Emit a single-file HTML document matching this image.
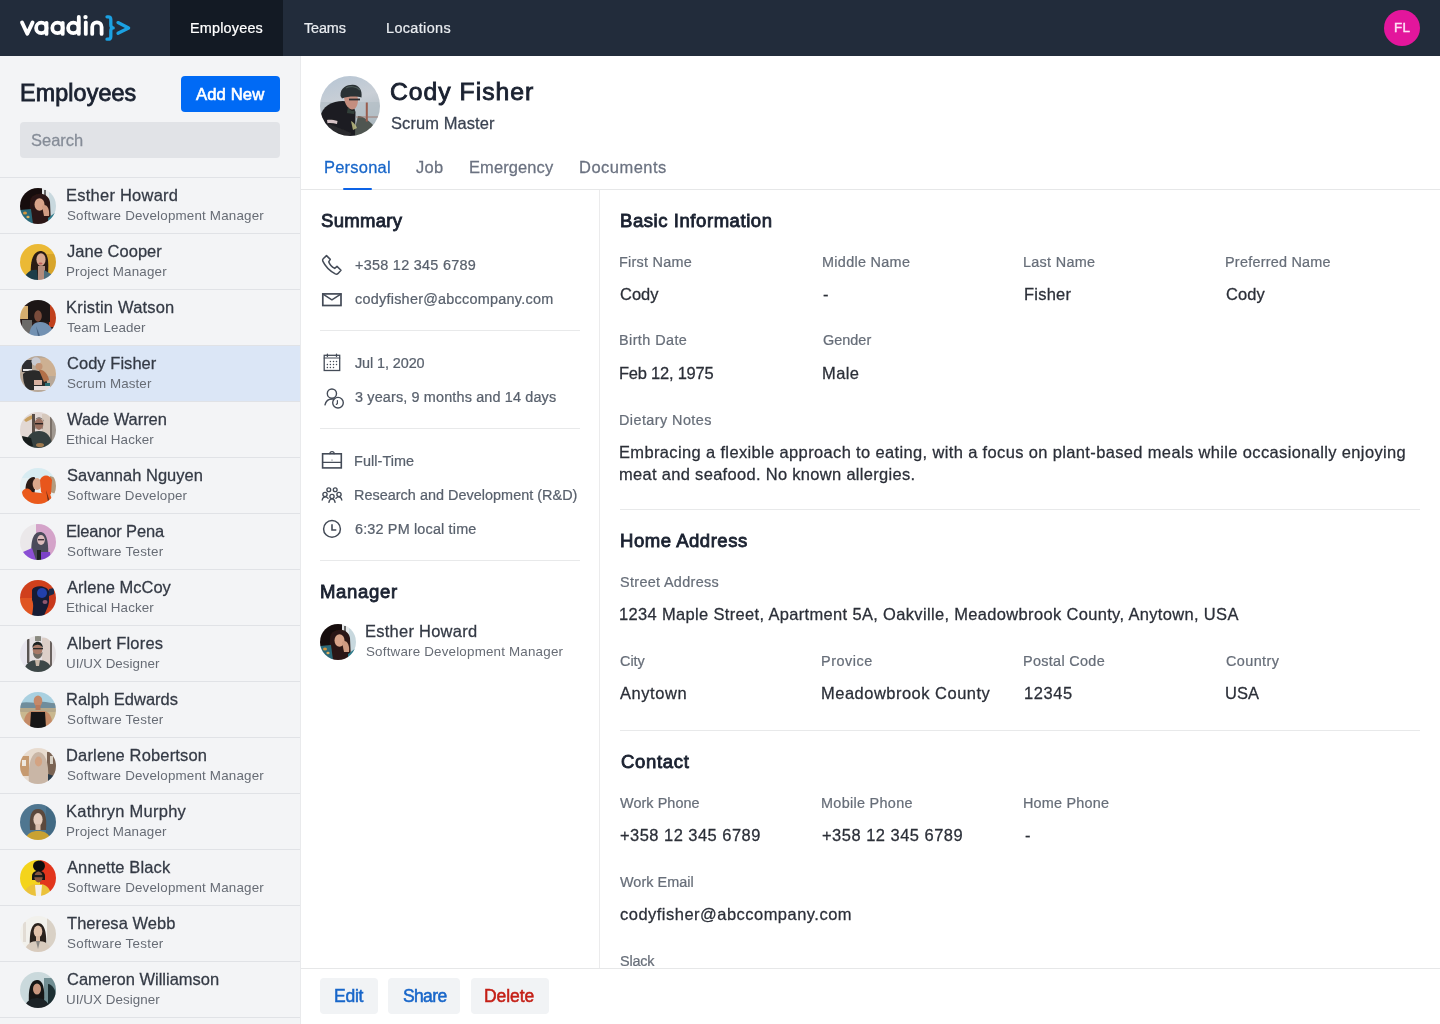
<!DOCTYPE html><html><head><meta charset="utf-8"><style>html,body{margin:0;padding:0}
body{width:1440px;height:1024px;overflow:hidden;position:relative;background:#fff;font-family:"Liberation Sans",sans-serif}
.t{position:absolute;white-space:nowrap;line-height:1;will-change:transform}
.b{position:absolute}
</style></head><body><div class="b" style="left:0;top:0;width:1440px;height:56px;background:#222c3b"></div><div class="b" style="left:170px;top:0;width:113px;height:56px;background:#131a24"></div><svg style="position:absolute;left:0;top:0" width="140" height="56" viewBox="0 0 140 56">
<g fill="none" stroke="#ffffff" stroke-width="3.8" stroke-linecap="round" stroke-linejoin="round">
<path d="M22,22.4 L27.3,33.8 L32.6,22.4"/>
<circle cx="41.3" cy="27.9" r="5.2"/><path d="M46.5,22.8 V33.9"/>
<circle cx="57.5" cy="27.9" r="5.2"/><path d="M62.7,22.8 V33.9"/>
<circle cx="73.3" cy="27.9" r="5.2"/><path d="M78.8,16.9 V33.9"/>
<path d="M85.8,22.4 V33.9"/>
<path d="M92.2,33.9 V27 A4.7,4.7 0 0 1 101.6,27 V33.9"/>
</g>
<circle cx="85.5" cy="17.1" r="2.2" fill="#fff"/>
<g fill="none" stroke="#1ba1e2" stroke-width="3.3" stroke-linecap="round" stroke-linejoin="round">
<path d="M107,16.8 H108.3 C110.2,16.8 110.8,17.8 110.8,19.6 V24.8 C110.8,26.5 111.5,27.9 113.2,27.9 C111.5,27.9 110.8,29.3 110.8,31 V36.4 C110.8,38.2 110.2,39.2 108.3,39.2 H107"/>
<path d="M118,22.6 L128.6,27.9 L118,33.2"/>
</g></svg><div class="b" style="left:1384px;top:10px;width:36px;height:36px;border-radius:50%;background:#e3169c"></div><div class="b" style="left:0;top:56px;width:300px;height:968px;background:#f3f4f6;border-right:1px solid #e9eaec"></div><div class="b" style="left:181px;top:76px;width:99px;height:36px;border-radius:4px;background:#006af5"></div><div class="b" style="left:20px;top:122px;width:260px;height:36px;border-radius:4px;background:#e1e3e7"></div><div class="b" style="left:0;top:177px;width:300px;height:1px;background:#e0e2e6"></div><div class="b" style="left:0;top:233px;width:300px;height:1px;background:#e0e2e6"></div><svg style="position:absolute;left:20px;top:188px" width="36" height="36" viewBox="0 0 36 36"><defs><clipPath id="c101"><circle cx="18" cy="18" r="18"/></clipPath><filter id="f101" x="-5%" y="-5%" width="110%" height="110%"><feGaussianBlur stdDeviation="0.6"/></filter></defs><g clip-path="url(#c101)"><g filter="url(#f101)"><rect x="-2" y="-2" width="40" height="40" fill="#170d0c" opacity="1"/><rect x="22" y="0" width="8" height="14" fill="#e6e9ea" opacity="1"/><rect x="29" y="0" width="8" height="36" fill="#c8d8de" opacity="1"/><rect x="24" y="2" width="2" height="12" fill="#6a6a6a" opacity="1"/><path d="M10,14 C10,4 28,2 30,14 L31,36 L9,36 Z" fill="#2a1712" opacity="1"/><ellipse cx="19.5" cy="16.5" rx="5" ry="6.2" fill="#d9a48a" opacity="1"/><path d="M22,18 C26,15 30,20 29,28 L24,28 Z" fill="#cf9b82" opacity="1"/><path d="M0,22 L11,21 L13,36 L0,36 Z" fill="#2b6878" opacity="1"/><ellipse cx="5" cy="25" rx="2" ry="1.6" fill="#d2953e" opacity="1"/><ellipse cx="8" cy="29" rx="1.6" ry="1.3" fill="#e0b060" opacity="1"/><path d="M28,30 L36,24 L36,36 L28,36 Z" fill="#2d7a8a" opacity="1"/></g></g></svg><div class="b" style="left:0;top:289px;width:300px;height:1px;background:#e0e2e6"></div><svg style="position:absolute;left:20px;top:244px" width="36" height="36" viewBox="0 0 36 36"><defs><clipPath id="c102"><circle cx="18" cy="18" r="18"/></clipPath><filter id="f102" x="-5%" y="-5%" width="110%" height="110%"><feGaussianBlur stdDeviation="0.6"/></filter></defs><g clip-path="url(#c102)"><g filter="url(#f102)"><rect x="-2" y="-2" width="40" height="40" fill="#ebb936" opacity="1"/><rect x="26" y="10" width="10" height="26" fill="#d8a52c" opacity="1"/><path d="M11,36 C10,22 11,8 20,7 C28,7 29,16 28,30 L27,36 Z" fill="#2b1c18" opacity="1"/><ellipse cx="21" cy="15.5" rx="4.6" ry="6.3" fill="#d9a890" opacity="1"/><ellipse cx="20.5" cy="19.5" rx="2" ry="0.9" fill="#c0605a" opacity="1"/><path d="M3,36 C6,28 12,25 17,26 L18,36 Z" fill="#1f3d48" opacity="1"/><rect x="18" y="22" width="7" height="14" fill="#b38c7c" opacity="1"/><path d="M24,26 L31,30 L31,36 L24,36 Z" fill="#4d6e7c" opacity="1"/></g></g></svg><div class="b" style="left:0;top:345px;width:300px;height:1px;background:#e0e2e6"></div><svg style="position:absolute;left:20px;top:300px" width="36" height="36" viewBox="0 0 36 36"><defs><clipPath id="c103"><circle cx="18" cy="18" r="18"/></clipPath><filter id="f103" x="-5%" y="-5%" width="110%" height="110%"><feGaussianBlur stdDeviation="0.6"/></filter></defs><g clip-path="url(#c103)"><g filter="url(#f103)"><rect x="-2" y="-2" width="40" height="40" fill="#2a1e1c" opacity="1"/><rect x="0" y="6" width="12" height="13" fill="#d6ad6e" opacity="1"/><rect x="9" y="4" width="4" height="6" fill="#f0ece4" opacity="1"/><rect x="29" y="5" width="7" height="22" fill="#c0411f" opacity="1"/><path d="M8,0 L30,0 L30,22 L8,22 Z" fill="#1e1614" opacity="1"/><ellipse cx="18" cy="16" rx="3.8" ry="5.8" fill="#7a4c3a" opacity="1"/><path d="M2,20 L12,20 L12,34 L2,34 Z" fill="#6c6a68" opacity="1"/><path d="M9,36 C10,26 14,22 20,22 C28,22 33,28 34,36 Z" fill="#7291b2" opacity="1"/><path d="M16,26 L20,36 L18,36 Z" fill="#4a6584" opacity="1"/></g></g></svg><div class="b" style="left:0;top:346px;width:300px;height:55px;background:#dbe6f6"></div><div class="b" style="left:0;top:401px;width:300px;height:1px;background:#e0e2e6"></div><svg style="position:absolute;left:20px;top:356px" width="36" height="36" viewBox="0 0 36 36"><defs><clipPath id="c104"><circle cx="18" cy="18" r="18"/></clipPath><filter id="f104" x="-5%" y="-5%" width="110%" height="110%"><feGaussianBlur stdDeviation="0.6"/></filter></defs><g clip-path="url(#c104)"><g filter="url(#f104)"><rect x="-2" y="-2" width="40" height="40" fill="#b8a898" opacity="1"/><rect x="20" y="2" width="16" height="18" fill="#cdb092" opacity="1"/><rect x="2" y="4" width="10" height="12" fill="#2e2e30" opacity="1"/><rect x="3" y="13" width="9" height="2" fill="#e8e8ea" opacity="1"/><ellipse cx="16" cy="5.5" rx="4.6" ry="4.2" fill="#c9cad2" opacity="1"/><ellipse cx="19" cy="10.5" rx="3.5" ry="3.6" fill="#c39474" opacity="1"/><path d="M3,18 C6,14 14,13 22,16 L27,26 L26,34 L8,34 C4,30 3,24 3,18 Z" fill="#29292b" opacity="1"/><path d="M19,14 C23,13 28,18 29,24 L24,26 Z" fill="#b27048" opacity="1"/><rect x="14" y="24" width="8" height="5" fill="#d8b0a0" opacity="1"/><rect x="14" y="30" width="16" height="4" fill="#e8dede" opacity="1"/><rect x="25" y="27" width="5" height="3" fill="#2a6a70" opacity="1"/></g></g></svg><div class="b" style="left:0;top:457px;width:300px;height:1px;background:#e0e2e6"></div><svg style="position:absolute;left:20px;top:412px" width="36" height="36" viewBox="0 0 36 36"><defs><clipPath id="c105"><circle cx="18" cy="18" r="18"/></clipPath><filter id="f105" x="-5%" y="-5%" width="110%" height="110%"><feGaussianBlur stdDeviation="0.6"/></filter></defs><g clip-path="url(#c105)"><g filter="url(#f105)"><rect x="-2" y="-2" width="40" height="40" fill="#e2d8d4" opacity="1"/><path d="M4,8 C8,4 12,3 14,3 L14,6 L6,10 Z" fill="#c8a060" opacity="1"/><rect x="12" y="2" width="3" height="22" fill="#5a5048" opacity="1"/><rect x="22" y="2" width="10" height="30" fill="#d6c8bc" opacity="1"/><rect x="30" y="4" width="2" height="28" fill="#7a7068" opacity="1"/><rect x="32" y="6" width="4" height="26" fill="#a09890" opacity="1"/><ellipse cx="19" cy="12" rx="4.4" ry="5.8" fill="#9a7060" opacity="1"/><path d="M14.5,10 C14.5,4 23.5,4 23.5,10 L23.5,8 C21,5.5 17,5.5 14.5,8 Z" fill="#2a2420" opacity="1"/><rect x="15" y="11" width="8" height="1.4" fill="#2a2420" opacity="1"/><path d="M15,14 C15,19 23,19 23,14 L23,16 C21,18 17,18 15,16 Z" fill="#4a3a32" opacity="1"/><path d="M5,36 C6,23 12,19 19,19 C27,19 31,24 33,36 Z" fill="#34403f" opacity="1"/><path d="M2,24 L11,26 L13,34 L4,34 Z" fill="#141e1d" opacity="1"/><ellipse cx="20" cy="33" rx="4" ry="2" fill="#a07a50" opacity="1"/></g></g></svg><div class="b" style="left:0;top:513px;width:300px;height:1px;background:#e0e2e6"></div><svg style="position:absolute;left:20px;top:468px" width="36" height="36" viewBox="0 0 36 36"><defs><clipPath id="c106"><circle cx="18" cy="18" r="18"/></clipPath><filter id="f106" x="-5%" y="-5%" width="110%" height="110%"><feGaussianBlur stdDeviation="0.6"/></filter></defs><g clip-path="url(#c106)"><g filter="url(#f106)"><rect x="-2" y="-2" width="40" height="40" fill="#e6f0f2" opacity="1"/><rect x="0" y="0" width="36" height="10" fill="#d8ecf2" opacity="1"/><path d="M30,8 L36,10 L36,26 L30,24 Z" fill="#a88660" opacity="0.8"/><path d="M6,26 C4,16 8,9 14,9 C16,9 16,16 14,28 Z" fill="#2a1b18" opacity="1"/><ellipse cx="17" cy="16" rx="4.4" ry="6" fill="#dba98c" opacity="1"/><path d="M20,12 C22,6 30,6 32,12 L31,26 C28,28 24,28 21,24 Z" fill="#e8561d" opacity="1"/><path d="M2,24 C5,19 10,20 12,24 L30,26 C32,30 32,34 32,36 L4,36 Z" fill="#ea5a1e" opacity="1"/><path d="M26,22 L30,34 L28,34 Z" fill="#3a1a12" opacity="0.7"/></g></g></svg><div class="b" style="left:0;top:569px;width:300px;height:1px;background:#e0e2e6"></div><svg style="position:absolute;left:20px;top:524px" width="36" height="36" viewBox="0 0 36 36"><defs><clipPath id="c107"><circle cx="18" cy="18" r="18"/></clipPath><filter id="f107" x="-5%" y="-5%" width="110%" height="110%"><feGaussianBlur stdDeviation="0.6"/></filter></defs><g clip-path="url(#c107)"><g filter="url(#f107)"><rect x="-2" y="-2" width="40" height="40" fill="#ebe8ea" opacity="1"/><rect x="16" y="0" width="20" height="36" fill="#d4a3c9" opacity="1"/><path d="M12,36 C10,20 12,8 20,8 C27,8 29,18 28,36 Z" fill="#4b4b5a" opacity="1"/><ellipse cx="21" cy="16" rx="3.8" ry="5" fill="#dcbcbc" opacity="1"/><rect x="18" y="15" width="6" height="1.4" fill="#40303a" opacity="1"/><path d="M3,28 L12,24 L16,36 L4,36 Z" fill="#8a4fd4" opacity="1"/><path d="M20,28 L30,28 L31,36 L19,36 Z" fill="#7b42c8" opacity="1"/><path d="M17,26 L21,26 L21,36 L17,36 Z" fill="#1e2222" opacity="1"/></g></g></svg><div class="b" style="left:0;top:625px;width:300px;height:1px;background:#e0e2e6"></div><svg style="position:absolute;left:20px;top:580px" width="36" height="36" viewBox="0 0 36 36"><defs><clipPath id="c108"><circle cx="18" cy="18" r="18"/></clipPath><filter id="f108" x="-5%" y="-5%" width="110%" height="110%"><feGaussianBlur stdDeviation="0.6"/></filter></defs><g clip-path="url(#c108)"><g filter="url(#f108)"><rect x="-2" y="-2" width="40" height="40" fill="#d0411f" opacity="1"/><rect x="0" y="18" width="14" height="18" fill="#e05420" opacity="1"/><rect x="26" y="14" width="10" height="14" fill="#c8381a" opacity="1"/><path d="M12,10 C14,5 26,5 29,11 L29,22 C28,28 26,30 24,36 L12,36 C13,30 14,24 12,20 Z" fill="#191c34" opacity="1"/><ellipse cx="22" cy="13" rx="5" ry="5" fill="#2145b8" opacity="0.9"/><path d="M29,9 L34,8 L34,14 L29,16 Z" fill="#1f2a48" opacity="1"/><ellipse cx="25" cy="22" rx="2.5" ry="2" fill="#c07088" opacity="0.7"/></g></g></svg><div class="b" style="left:0;top:681px;width:300px;height:1px;background:#e0e2e6"></div><svg style="position:absolute;left:20px;top:636px" width="36" height="36" viewBox="0 0 36 36"><defs><clipPath id="c109"><circle cx="18" cy="18" r="18"/></clipPath><filter id="f109" x="-5%" y="-5%" width="110%" height="110%"><feGaussianBlur stdDeviation="0.6"/></filter></defs><g clip-path="url(#c109)"><g filter="url(#f109)"><rect x="-2" y="-2" width="40" height="40" fill="#e6e2e4" opacity="1"/><rect x="0" y="4" width="8" height="26" fill="#e8e6ee" opacity="1"/><rect x="7" y="3" width="2.4" height="24" fill="#5a5452" opacity="1"/><rect x="22" y="2" width="10" height="30" fill="#dccfc8" opacity="1"/><rect x="30" y="5" width="2" height="26" fill="#6a625e" opacity="1"/><rect x="15" y="0" width="6" height="5" fill="#8a8a80" opacity="1"/><ellipse cx="17.5" cy="13.5" rx="4.8" ry="6.4" fill="#a87a68" opacity="1"/><path d="M12.5,12 C12,4 23,3.5 22.8,12 C21,7.5 14,7.5 12.5,12 Z" fill="#1f2322" opacity="1"/><rect x="13" y="12" width="10" height="1.3" fill="#2a2a2a" opacity="1"/><path d="M13,16 C13,25 22.5,25 22.5,16 C20,19 15.5,19 13,16 Z" fill="#6e6a64" opacity="1"/><path d="M4,36 C5,27 10,24 17.5,24 C26,24 31,27 32,36 Z" fill="#3e4646" opacity="1"/><path d="M15,24 L20,24 L19,30 L16,30 Z" fill="#c8b8a8" opacity="1"/></g></g></svg><div class="b" style="left:0;top:737px;width:300px;height:1px;background:#e0e2e6"></div><svg style="position:absolute;left:20px;top:692px" width="36" height="36" viewBox="0 0 36 36"><defs><clipPath id="c110"><circle cx="18" cy="18" r="18"/></clipPath><filter id="f110" x="-5%" y="-5%" width="110%" height="110%"><feGaussianBlur stdDeviation="0.6"/></filter></defs><g clip-path="url(#c110)"><g filter="url(#f110)"><rect x="-2" y="-2" width="40" height="40" fill="#c9b88f" opacity="1"/><rect x="0" y="0" width="36" height="11" fill="#a9d0e0" opacity="1"/><path d="M0,11 C8,9 14,12 20,10 C26,9 32,12 36,11 L36,16 L0,16 Z" fill="#6f8d9c" opacity="1"/><rect x="0" y="16" width="36" height="4" fill="#b5a88a" opacity="1"/><ellipse cx="18" cy="9" rx="4.3" ry="5.6" fill="#c58868" opacity="1"/><rect x="15.5" y="13" width="5" height="5" fill="#b87a5c" opacity="1"/><path d="M4,36 C3,26 6,20 12,19 L24,19 C30,20 33,26 32,36 Z" fill="#c48a66" opacity="1"/><path d="M10,36 L11,20 L25,20 L26,36 Z" fill="#121212" opacity="1"/></g></g></svg><div class="b" style="left:0;top:793px;width:300px;height:1px;background:#e0e2e6"></div><svg style="position:absolute;left:20px;top:748px" width="36" height="36" viewBox="0 0 36 36"><defs><clipPath id="c111"><circle cx="18" cy="18" r="18"/></clipPath><filter id="f111" x="-5%" y="-5%" width="110%" height="110%"><feGaussianBlur stdDeviation="0.6"/></filter></defs><g clip-path="url(#c111)"><g filter="url(#f111)"><rect x="-2" y="-2" width="40" height="40" fill="#e8dcd0" opacity="1"/><rect x="0" y="8" width="9" height="20" fill="#c69a70" opacity="1"/><rect x="2" y="12" width="4" height="6" fill="#eee8e0" opacity="1"/><rect x="27" y="4" width="9" height="28" fill="#7a6452" opacity="1"/><rect x="30" y="8" width="3" height="8" fill="#d8d0c4" opacity="1"/><path d="M9,36 C8,22 9,5 18.5,4 C28,5 29,22 28,36 Z" fill="#c9b6a6" opacity="1"/><ellipse cx="18.5" cy="13.5" rx="3.6" ry="5" fill="#d3a382" opacity="1"/><path d="M28,26 L34,28 L34,36 L28,36 Z" fill="#2a3a48" opacity="1"/></g></g></svg><div class="b" style="left:0;top:849px;width:300px;height:1px;background:#e0e2e6"></div><svg style="position:absolute;left:20px;top:804px" width="36" height="36" viewBox="0 0 36 36"><defs><clipPath id="c112"><circle cx="18" cy="18" r="18"/></clipPath><filter id="f112" x="-5%" y="-5%" width="110%" height="110%"><feGaussianBlur stdDeviation="0.6"/></filter></defs><g clip-path="url(#c112)"><g filter="url(#f112)"><rect x="-2" y="-2" width="40" height="40" fill="#4f7690" opacity="1"/><rect x="26" y="0" width="10" height="36" fill="#436a84" opacity="1"/><path d="M10,26 C9,12 11,5 18,5 C25,5 27,12 26,26 Z" fill="#5b4a3c" opacity="1"/><ellipse cx="18" cy="15.5" rx="4.6" ry="6.4" fill="#e6cdbd" opacity="1"/><rect x="15.5" y="20" width="5" height="6" fill="#dcc0ae" opacity="1"/><path d="M5,36 C7,29 12,27 18,27 C24,27 29,29 31,36 Z" fill="#c9a233" opacity="1"/></g></g></svg><div class="b" style="left:0;top:905px;width:300px;height:1px;background:#e0e2e6"></div><svg style="position:absolute;left:20px;top:860px" width="36" height="36" viewBox="0 0 36 36"><defs><clipPath id="c113"><circle cx="18" cy="18" r="18"/></clipPath><filter id="f113" x="-5%" y="-5%" width="110%" height="110%"><feGaussianBlur stdDeviation="0.6"/></filter></defs><g clip-path="url(#c113)"><g filter="url(#f113)"><rect x="-2" y="-2" width="40" height="40" fill="#f4d41f" opacity="1"/><rect x="20" y="0" width="16" height="36" fill="#e2361f" opacity="1"/><ellipse cx="19" cy="6" rx="6" ry="5.5" fill="#111" opacity="1"/><path d="M12,16 C12,9 25,9 25,16 L25,20 L12,20 Z" fill="#151515" opacity="1"/><ellipse cx="18.5" cy="17" rx="4.2" ry="5.4" fill="#8a5840" opacity="1"/><rect x="13.5" y="15" width="10" height="2.2" fill="#1a1a1a" opacity="1"/><path d="M4,36 C5,27 10,24 18,24 C26,24 30,27 31,36 Z" fill="#ebc23b" opacity="1"/><path d="M15,25 L22,25 L21,36 L16,36 Z" fill="#f4f0ea" opacity="1"/></g></g></svg><div class="b" style="left:0;top:961px;width:300px;height:1px;background:#e0e2e6"></div><svg style="position:absolute;left:20px;top:916px" width="36" height="36" viewBox="0 0 36 36"><defs><clipPath id="c114"><circle cx="18" cy="18" r="18"/></clipPath><filter id="f114" x="-5%" y="-5%" width="110%" height="110%"><feGaussianBlur stdDeviation="0.6"/></filter></defs><g clip-path="url(#c114)"><g filter="url(#f114)"><rect x="-2" y="-2" width="40" height="40" fill="#f2f1ec" opacity="1"/><rect x="27" y="2" width="9" height="34" fill="#d9d1c6" opacity="1"/><rect x="3" y="6" width="3" height="20" fill="#e2dcd4" opacity="1"/><path d="M10,32 C9,18 11,7 18,7 C25,7 27,18 26,32 Z" fill="#2b211e" opacity="1"/><ellipse cx="18" cy="15.5" rx="4.3" ry="6" fill="#e2c3ab" opacity="1"/><rect x="16" y="20" width="4" height="5" fill="#d8b8a0" opacity="1"/><path d="M4,36 C6,28 11,25 18,25 C25,25 30,28 32,36 Z" fill="#d8cbbd" opacity="1"/><path d="M16,25 L18,33 L20,25" fill="#6a6a6a" opacity="0.7"/></g></g></svg><div class="b" style="left:0;top:1017px;width:300px;height:1px;background:#e0e2e6"></div><svg style="position:absolute;left:20px;top:972px" width="36" height="36" viewBox="0 0 36 36"><defs><clipPath id="c115"><circle cx="18" cy="18" r="18"/></clipPath><filter id="f115" x="-5%" y="-5%" width="110%" height="110%"><feGaussianBlur stdDeviation="0.6"/></filter></defs><g clip-path="url(#c115)"><g filter="url(#f115)"><rect x="-2" y="-2" width="40" height="40" fill="#cad9dc" opacity="1"/><rect x="24" y="6" width="12" height="30" fill="#6f8d92" opacity="1"/><path d="M28,12 C32,12 36,18 36,24 L36,34 L28,34 Z" fill="#1f2e32" opacity="1"/><path d="M9,32 C8,18 10,8 17,8 C23,8 25,16 24,30 Z" fill="#141414" opacity="1"/><ellipse cx="17" cy="17" rx="4" ry="5.6" fill="#c8977f" opacity="1"/><path d="M4,36 C6,29 11,26 17,26 C23,26 28,29 30,36 Z" fill="#1b2427" opacity="1"/></g></g></svg><svg style="position:absolute;left:320px;top:76px" width="60" height="60" viewBox="0 0 60 60">
<defs><clipPath id="hc"><circle cx="30" cy="30" r="30"/></clipPath>
<filter id="hf" x="-5%" y="-5%" width="110%" height="110%"><feGaussianBlur stdDeviation="0.7"/></filter><linearGradient id="hg" x1="0" y1="0" x2="0.3" y2="1"><stop offset="0" stop-color="#b4c4d4"/><stop offset="0.5" stop-color="#c9cfd6"/><stop offset="1" stop-color="#a9b6bd"/></linearGradient></defs>
<g clip-path="url(#hc)"><g filter="url(#hf)"><rect x="-2" y="-2" width="64" height="64" fill="url(#hg)"/>
<rect x="0" y="26" width="60" height="14" fill="#b3bfc6" opacity="0.7"/>
<path d="M33,60 L38,40 C44,40 50,46 56,52 L60,60 Z" fill="#4f5751"/>
<rect x="45.8" y="26.5" width="2" height="19" fill="#9a5d4e"/><path d="M36,41 H60" stroke="#9a6a5e" stroke-width="0.8"/>
<path d="M0,42 C2,30 12,25 23,25 C30,25 34,30 35.5,36 L35,60 L0,60 Z" fill="#1f1f22"/>
<path d="M7,44 C10,43.5 14,44 17.5,45 L17,48 C13.5,47 10,46.8 7.5,47.2 Z" fill="#d6c3c6"/>
<path d="M9,48 L31,57 L30,61 L8,53 Z" fill="#2a2a2e"/>
<path d="M31,45 C33,46 36,49 37,52 L33,54 Z" fill="#c9c98a" opacity="0.8"/>
<path d="M24,20 C24,26 27,33 32,33.5 C36,33.5 38,29 38,23 L37,19 Z" fill="#c48e7f"/>
<path d="M28,31 C30,35 33,36 35,34 L34,38 L27,37 Z" fill="#33403a"/>
<path d="M20.5,20 C20,11 28,8.5 33,8.8 C39,9.2 42.5,14 41.5,21.5 C37,20 28,20 22,22.5 Z" fill="#2c3134"/>
<path d="M29,23.5 H40" stroke="#2e2e33" stroke-width="1.8"/><path d="M26,12 C30,10 36,10 40,14" stroke="#4a5a58" stroke-width="1.2" fill="none"/>
</g></g></svg><div class="b" style="left:301px;top:189px;width:1139px;height:1px;background:#e6e7e8"></div><div class="b" style="left:343px;top:188px;width:29px;height:2px;border-radius:1px;background:#0d63e6"></div><div class="b" style="left:599px;top:190px;width:1px;height:778px;background:#ebebec"></div><div class="b" style="left:320px;top:330px;width:260px;height:1px;background:#e8e9ea"></div><div class="b" style="left:320px;top:428px;width:260px;height:1px;background:#e8e9ea"></div><div class="b" style="left:320px;top:560px;width:260px;height:1px;background:#e8e9ea"></div><svg style="position:absolute;left:318px;top:250px" width="30" height="30" viewBox="0 0 30 30" fill="none" stroke="#444b57" stroke-width="1.5" stroke-linejoin="round" stroke-linecap="round"><path d="M8.5,5.6 L12.3,9.4 L10.7,11.8 C11.6,14.5 14,17 16.7,18.4 L19,16.4 L23,20.2 L20.1,23.4 C19.3,24.2 18.3,24.4 17.3,23.9 C11.2,20.6 7.2,16.2 4.8,11.1 C4.4,10.3 4.5,9.5 5.2,8.8 Z"/></svg><svg style="position:absolute;left:318px;top:250px" width="30" height="62" viewBox="0 0 30 62" fill="none" stroke="#444b57" stroke-width="1.5" stroke-linejoin="round" stroke-linecap="round"><rect x="4.8" y="43.9" width="18.2" height="11.6" stroke-width="1.7" stroke-linejoin="miter"/><path d="M5,44.2 L13.9,49.8 L22.8,44.2" stroke-width="1.5"/></svg><svg style="position:absolute;left:318px;top:350px" width="30" height="30" viewBox="0 0 30 30" fill="none" stroke="#444b57" stroke-width="1.5" stroke-linejoin="round" stroke-linecap="round"><rect x="6.2" y="5.3" width="15.5" height="15.2" stroke-width="1.3" stroke-linejoin="miter"/><path d="M6.2,8 H21.7" stroke-width="1.1"/><path d="M9.4,4.2 V6.4 M18.5,4.2 V6.4" stroke-width="1.3"/><circle cx="12.4" cy="11.4" r="0.75" fill="#444b57" stroke="none"/><circle cx="15.5" cy="11.4" r="0.75" fill="#444b57" stroke="none"/><circle cx="18.5" cy="11.4" r="0.75" fill="#444b57" stroke="none"/><circle cx="9.4" cy="14.4" r="0.75" fill="#444b57" stroke="none"/><circle cx="12.4" cy="14.4" r="0.75" fill="#444b57" stroke="none"/><circle cx="15.5" cy="14.4" r="0.75" fill="#444b57" stroke="none"/><circle cx="18.5" cy="14.4" r="0.75" fill="#444b57" stroke="none"/><circle cx="9.4" cy="17.5" r="0.75" fill="#444b57" stroke="none"/><circle cx="12.4" cy="17.5" r="0.75" fill="#444b57" stroke="none"/><circle cx="15.5" cy="17.5" r="0.75" fill="#444b57" stroke="none"/></svg><svg style="position:absolute;left:318px;top:350px" width="30" height="62" viewBox="0 0 30 62" fill="none" stroke="#444b57" stroke-width="1.5" stroke-linejoin="round" stroke-linecap="round"><circle cx="13.9" cy="43.6" r="4.6" stroke-width="1.4"/><path d="M7,54.8 C8,50.5 11.5,48.6 15.5,49" stroke-width="1.4"/><circle cx="20" cy="52.7" r="5.3" stroke-width="1.4"/><path d="M19.4,50.5 V53.6 L18.3,54.4" stroke-width="1.2"/></svg><svg style="position:absolute;left:318px;top:446px" width="30" height="30" viewBox="0 0 30 30" fill="none" stroke="#444b57" stroke-width="1.5" stroke-linejoin="round" stroke-linecap="round"><rect x="4.6" y="7.8" width="18.7" height="14.1" stroke-width="1.6" stroke-linejoin="miter"/><path d="M4.6,16.4 H23.3" stroke-width="1.4"/><path d="M11.9,7.7 C12,4.9 16.1,4.9 16.2,7.7" stroke-width="1.3"/><circle cx="14" cy="14" r="0.6" fill="#444b57" stroke="none"/></svg><svg style="position:absolute;left:318px;top:446px" width="30" height="62" viewBox="0 0 30 62" fill="none" stroke="#444b57" stroke-width="1.5" stroke-linejoin="round" stroke-linecap="round"><g stroke-width="1.35"><circle cx="10.8" cy="43.7" r="1.9"/><circle cx="17.2" cy="43.7" r="1.9"/><circle cx="7" cy="48.5" r="2.1"/><circle cx="21" cy="48.5" r="2.1"/><circle cx="14" cy="50.5" r="2.1"/><path d="M4.2,54 C4.6,51.8 5.8,50.9 7.2,50.9 C8.4,50.9 9.4,51.4 10.1,52.3"/><path d="M23.8,54 C23.4,51.8 22.2,50.9 20.8,50.9 C19.6,50.9 18.6,51.4 17.9,52.3"/><path d="M10.9,56.3 C11.3,54 12.5,52.9 14,52.9 C15.5,52.9 16.7,54 17.1,56.3"/></g></svg><svg style="position:absolute;left:318px;top:446px" width="30" height="100" viewBox="0 0 30 100" fill="none" stroke="#444b57" stroke-width="1.5" stroke-linejoin="round" stroke-linecap="round"><circle cx="14" cy="82.9" r="8.4" stroke-width="1.5"/><path d="M14,78.3 V84 H18.3" stroke-width="1.6" stroke-linejoin="miter" stroke-linecap="butt"/></svg><svg style="position:absolute;left:320px;top:624px" width="36" height="36" viewBox="0 0 36 36"><defs><clipPath id="c116"><circle cx="18" cy="18" r="18"/></clipPath><filter id="f116" x="-5%" y="-5%" width="110%" height="110%"><feGaussianBlur stdDeviation="0.6"/></filter></defs><g clip-path="url(#c116)"><g filter="url(#f116)"><rect x="-2" y="-2" width="40" height="40" fill="#170d0c" opacity="1"/><rect x="22" y="0" width="8" height="14" fill="#e6e9ea" opacity="1"/><rect x="29" y="0" width="8" height="36" fill="#c8d8de" opacity="1"/><rect x="24" y="2" width="2" height="12" fill="#6a6a6a" opacity="1"/><path d="M10,14 C10,4 28,2 30,14 L31,36 L9,36 Z" fill="#2a1712" opacity="1"/><ellipse cx="19.5" cy="16.5" rx="5" ry="6.2" fill="#d9a48a" opacity="1"/><path d="M22,18 C26,15 30,20 29,28 L24,28 Z" fill="#cf9b82" opacity="1"/><path d="M0,22 L11,21 L13,36 L0,36 Z" fill="#2b6878" opacity="1"/><ellipse cx="5" cy="25" rx="2" ry="1.6" fill="#d2953e" opacity="1"/><ellipse cx="8" cy="29" rx="1.6" ry="1.3" fill="#e0b060" opacity="1"/><path d="M28,30 L36,24 L36,36 L28,36 Z" fill="#2d7a8a" opacity="1"/></g></g></svg><div class="b" style="left:620px;top:509px;width:800px;height:1px;background:#e8e9ea"></div><div class="b" style="left:620px;top:730px;width:800px;height:1px;background:#e8e9ea"></div><div class="t" style="left:189.70px;top:21.09px;font-size:14.42px;color:#ffffff;-webkit-text-stroke:0.231px #ffffff;letter-spacing:0.192px">Employees</div><div class="t" style="left:304.00px;top:21.09px;font-size:14.42px;color:#e9ecf0;-webkit-text-stroke:0.231px #e9ecf0;letter-spacing:-0.132px">Teams</div><div class="t" style="left:386.30px;top:21.09px;font-size:14.42px;color:#e9ecf0;-webkit-text-stroke:0.231px #e9ecf0;letter-spacing:0.367px">Locations</div><div class="t" style="left:1393.70px;top:21.47px;font-size:13.39px;color:#ffe3f6;-webkit-text-stroke:0.40px #ffe3f6;letter-spacing:0.430px">FL</div><div class="t" style="left:19.80px;top:82.29px;font-size:23.28px;color:#1a2130;-webkit-text-stroke:0.84px #1a2130;letter-spacing:0.143px">Employees</div><div class="t" style="left:195.80px;top:86.90px;font-size:16.66px;color:#ffffff;-webkit-text-stroke:0.60px #ffffff;letter-spacing:0.107px">Add New</div><div class="t" style="left:30.60px;top:131.85px;font-size:16.48px;color:#858c97;-webkit-text-stroke:0.264px #858c97;letter-spacing:0.016px">Search</div><div class="t" style="left:65.70px;top:187.35px;font-size:16.48px;color:#343a45;-webkit-text-stroke:0.264px #343a45;letter-spacing:0.253px">Esther Howard</div><div class="t" style="left:66.50px;top:208.77px;font-size:13.39px;color:#676c75;letter-spacing:0.183px">Software Development Manager</div><div class="t" style="left:66.70px;top:243.35px;font-size:16.48px;color:#343a45;-webkit-text-stroke:0.264px #343a45;letter-spacing:0.048px">Jane Cooper</div><div class="t" style="left:65.50px;top:264.77px;font-size:13.39px;color:#676c75;letter-spacing:0.180px">Project Manager</div><div class="t" style="left:65.70px;top:299.35px;font-size:16.48px;color:#343a45;-webkit-text-stroke:0.264px #343a45;letter-spacing:0.208px">Kristin Watson</div><div class="t" style="left:66.50px;top:320.77px;font-size:13.39px;color:#676c75;letter-spacing:0.039px">Team Leader</div><div class="t" style="left:66.70px;top:355.35px;font-size:16.48px;color:#343a45;-webkit-text-stroke:0.264px #343a45;letter-spacing:0.051px">Cody Fisher</div><div class="t" style="left:66.50px;top:376.77px;font-size:13.39px;color:#676c75;letter-spacing:0.102px">Scrum Master</div><div class="t" style="left:66.70px;top:411.35px;font-size:16.48px;color:#343a45;-webkit-text-stroke:0.264px #343a45;letter-spacing:-0.050px">Wade Warren</div><div class="t" style="left:65.50px;top:432.77px;font-size:13.39px;color:#676c75;letter-spacing:0.118px">Ethical Hacker</div><div class="t" style="left:66.70px;top:467.35px;font-size:16.48px;color:#343a45;-webkit-text-stroke:0.264px #343a45;letter-spacing:0.025px">Savannah Nguyen</div><div class="t" style="left:66.50px;top:488.77px;font-size:13.39px;color:#676c75;letter-spacing:0.152px">Software Developer</div><div class="t" style="left:65.70px;top:523.35px;font-size:16.48px;color:#343a45;-webkit-text-stroke:0.264px #343a45;letter-spacing:-0.158px">Eleanor Pena</div><div class="t" style="left:66.50px;top:544.77px;font-size:13.39px;color:#676c75;letter-spacing:0.253px">Software Tester</div><div class="t" style="left:66.70px;top:579.35px;font-size:16.48px;color:#343a45;-webkit-text-stroke:0.264px #343a45;letter-spacing:0.038px">Arlene McCoy</div><div class="t" style="left:65.50px;top:600.77px;font-size:13.39px;color:#676c75;letter-spacing:0.118px">Ethical Hacker</div><div class="t" style="left:66.70px;top:635.35px;font-size:16.48px;color:#343a45;-webkit-text-stroke:0.264px #343a45;letter-spacing:0.223px">Albert Flores</div><div class="t" style="left:65.50px;top:656.77px;font-size:13.39px;color:#676c75;letter-spacing:0.042px">UI/UX Designer</div><div class="t" style="left:65.70px;top:691.35px;font-size:16.48px;color:#343a45;-webkit-text-stroke:0.264px #343a45;letter-spacing:0.030px">Ralph Edwards</div><div class="t" style="left:66.50px;top:712.77px;font-size:13.39px;color:#676c75;letter-spacing:0.260px">Software Tester</div><div class="t" style="left:65.70px;top:747.35px;font-size:16.48px;color:#343a45;-webkit-text-stroke:0.264px #343a45;letter-spacing:0.170px">Darlene Robertson</div><div class="t" style="left:66.50px;top:768.77px;font-size:13.39px;color:#676c75;letter-spacing:0.183px">Software Development Manager</div><div class="t" style="left:65.70px;top:803.35px;font-size:16.48px;color:#343a45;-webkit-text-stroke:0.264px #343a45;letter-spacing:0.276px">Kathryn Murphy</div><div class="t" style="left:65.50px;top:824.77px;font-size:13.39px;color:#676c75;letter-spacing:0.166px">Project Manager</div><div class="t" style="left:66.70px;top:859.35px;font-size:16.48px;color:#343a45;-webkit-text-stroke:0.264px #343a45;letter-spacing:0.126px">Annette Black</div><div class="t" style="left:66.50px;top:880.77px;font-size:13.39px;color:#676c75;letter-spacing:0.183px">Software Development Manager</div><div class="t" style="left:66.70px;top:915.35px;font-size:16.48px;color:#343a45;-webkit-text-stroke:0.264px #343a45;letter-spacing:0.068px">Theresa Webb</div><div class="t" style="left:66.50px;top:936.77px;font-size:13.39px;color:#676c75;letter-spacing:0.260px">Software Tester</div><div class="t" style="left:66.70px;top:971.35px;font-size:16.48px;color:#343a45;-webkit-text-stroke:0.264px #343a45;letter-spacing:0.014px">Cameron Williamson</div><div class="t" style="left:65.50px;top:992.77px;font-size:13.39px;color:#676c75;letter-spacing:0.065px">UI/UX Designer</div><div class="t" style="left:390.00px;top:80.27px;font-size:24.72px;color:#1a2130;-webkit-text-stroke:0.89px #1a2130;letter-spacing:0.998px">Cody Fisher</div><div class="t" style="left:391.00px;top:114.85px;font-size:16.48px;color:#3b4352;-webkit-text-stroke:0.264px #3b4352;letter-spacing:0.091px">Scrum Master</div><div class="t" style="left:324.00px;top:158.85px;font-size:16.48px;color:#1866c9;-webkit-text-stroke:0.264px #1866c9;letter-spacing:0.237px">Personal</div><div class="t" style="left:416.40px;top:158.85px;font-size:16.48px;color:#6b7280;-webkit-text-stroke:0.264px #6b7280;letter-spacing:0.353px">Job</div><div class="t" style="left:468.70px;top:158.85px;font-size:16.48px;color:#6b7280;-webkit-text-stroke:0.264px #6b7280;letter-spacing:0.105px">Emergency</div><div class="t" style="left:579.00px;top:158.85px;font-size:16.48px;color:#6b7280;-webkit-text-stroke:0.264px #6b7280;letter-spacing:0.505px">Documents</div><div class="t" style="left:320.80px;top:212.31px;font-size:18.54px;color:#1a2130;-webkit-text-stroke:0.83px #1a2130;letter-spacing:0.297px">Summary</div><div class="t" style="left:354.90px;top:258.09px;font-size:14.42px;color:#59616d;-webkit-text-stroke:0.231px #59616d;letter-spacing:0.283px">+358 12 345 6789</div><div class="t" style="left:354.90px;top:291.89px;font-size:14.42px;color:#59616d;-webkit-text-stroke:0.231px #59616d;letter-spacing:0.254px">codyfisher@abccompany.com</div><div class="t" style="left:354.90px;top:356.09px;font-size:14.42px;color:#59616d;-webkit-text-stroke:0.231px #59616d;letter-spacing:-0.087px">Jul 1, 2020</div><div class="t" style="left:354.90px;top:390.39px;font-size:14.42px;color:#59616d;-webkit-text-stroke:0.231px #59616d;letter-spacing:0.146px">3 years, 9 months and 14 days</div><div class="t" style="left:353.90px;top:454.19px;font-size:14.42px;color:#59616d;-webkit-text-stroke:0.231px #59616d;letter-spacing:0.078px">Full-Time</div><div class="t" style="left:353.90px;top:488.19px;font-size:14.42px;color:#59616d;-webkit-text-stroke:0.231px #59616d;letter-spacing:0.028px">Research and Development (R&amp;D)</div><div class="t" style="left:354.90px;top:522.19px;font-size:14.42px;color:#59616d;-webkit-text-stroke:0.231px #59616d;letter-spacing:0.165px">6:32 PM local time</div><div class="t" style="left:319.50px;top:583.31px;font-size:18.54px;color:#1a2130;-webkit-text-stroke:0.83px #1a2130;letter-spacing:0.672px">Manager</div><div class="t" style="left:365.40px;top:623.35px;font-size:16.48px;color:#343a45;-webkit-text-stroke:0.264px #343a45;letter-spacing:0.262px">Esther Howard</div><div class="t" style="left:366.40px;top:645.27px;font-size:13.39px;color:#676c75;letter-spacing:0.191px">Software Development Manager</div><div class="t" style="left:619.50px;top:212.31px;font-size:18.54px;color:#1a2130;-webkit-text-stroke:0.83px #1a2130;letter-spacing:0.553px">Basic Information</div><div class="t" style="left:619.40px;top:254.99px;font-size:14.42px;color:#676e79;-webkit-text-stroke:0.231px #676e79;letter-spacing:0.264px">First Name</div><div class="t" style="left:821.60px;top:254.99px;font-size:14.42px;color:#676e79;-webkit-text-stroke:0.231px #676e79;letter-spacing:0.304px">Middle Name</div><div class="t" style="left:1023.00px;top:254.99px;font-size:14.42px;color:#676e79;-webkit-text-stroke:0.231px #676e79;letter-spacing:0.294px">Last Name</div><div class="t" style="left:1225.40px;top:254.99px;font-size:14.42px;color:#676e79;-webkit-text-stroke:0.231px #676e79;letter-spacing:0.241px">Preferred Name</div><div class="t" style="left:620.40px;top:285.85px;font-size:16.48px;color:#2b2f38;-webkit-text-stroke:0.264px #2b2f38;letter-spacing:0.030px">Cody</div><div class="t" style="left:822.60px;top:285.85px;font-size:16.48px;color:#2b2f38;-webkit-text-stroke:0.264px #2b2f38">-</div><div class="t" style="left:1023.50px;top:285.85px;font-size:16.48px;color:#2b2f38;-webkit-text-stroke:0.264px #2b2f38;letter-spacing:0.246px">Fisher</div><div class="t" style="left:1226.40px;top:285.85px;font-size:16.48px;color:#2b2f38;-webkit-text-stroke:0.264px #2b2f38;letter-spacing:0.063px">Cody</div><div class="t" style="left:619.40px;top:333.49px;font-size:14.42px;color:#676e79;-webkit-text-stroke:0.231px #676e79;letter-spacing:0.418px">Birth Date</div><div class="t" style="left:822.60px;top:333.49px;font-size:14.42px;color:#676e79;-webkit-text-stroke:0.231px #676e79;letter-spacing:0.029px">Gender</div><div class="t" style="left:619.40px;top:364.85px;font-size:16.48px;color:#2b2f38;-webkit-text-stroke:0.264px #2b2f38;letter-spacing:-0.218px">Feb 12, 1975</div><div class="t" style="left:821.60px;top:364.85px;font-size:16.48px;color:#2b2f38;-webkit-text-stroke:0.264px #2b2f38;letter-spacing:0.421px">Male</div><div class="t" style="left:619.40px;top:412.79px;font-size:14.42px;color:#676e79;-webkit-text-stroke:0.231px #676e79;letter-spacing:0.428px">Dietary Notes</div><div class="t" style="left:619.40px;top:443.65px;font-size:16.48px;color:#2b2f38;-webkit-text-stroke:0.264px #2b2f38;letter-spacing:0.366px">Embracing a flexible approach to eating, with a focus on plant-based meals while occasionally enjoying</div><div class="t" style="left:619.40px;top:465.55px;font-size:16.48px;color:#2b2f38;-webkit-text-stroke:0.264px #2b2f38;letter-spacing:0.318px">meat and seafood. No known allergies.</div><div class="t" style="left:619.50px;top:532.01px;font-size:18.54px;color:#1a2130;-webkit-text-stroke:0.83px #1a2130;letter-spacing:0.519px">Home Address</div><div class="t" style="left:620.40px;top:575.19px;font-size:14.42px;color:#676e79;-webkit-text-stroke:0.231px #676e79;letter-spacing:0.324px">Street Address</div><div class="t" style="left:619.40px;top:605.55px;font-size:16.48px;color:#2b2f38;-webkit-text-stroke:0.264px #2b2f38;letter-spacing:0.346px">1234 Maple Street, Apartment 5A, Oakville, Meadowbrook County, Anytown, USA</div><div class="t" style="left:620.40px;top:654.39px;font-size:14.42px;color:#676e79;-webkit-text-stroke:0.231px #676e79">City</div><div class="t" style="left:820.70px;top:654.39px;font-size:14.42px;color:#676e79;-webkit-text-stroke:0.231px #676e79;letter-spacing:0.529px">Provice</div><div class="t" style="left:1023.00px;top:654.39px;font-size:14.42px;color:#676e79;-webkit-text-stroke:0.231px #676e79;letter-spacing:0.323px">Postal Code</div><div class="t" style="left:1226.00px;top:654.39px;font-size:14.42px;color:#676e79;-webkit-text-stroke:0.231px #676e79;letter-spacing:0.410px">Country</div><div class="t" style="left:620.40px;top:685.25px;font-size:16.48px;color:#2b2f38;-webkit-text-stroke:0.264px #2b2f38;letter-spacing:0.582px">Anytown</div><div class="t" style="left:821.30px;top:685.25px;font-size:16.48px;color:#2b2f38;-webkit-text-stroke:0.264px #2b2f38;letter-spacing:0.508px">Meadowbrook County</div><div class="t" style="left:1023.50px;top:685.25px;font-size:16.48px;color:#2b2f38;-webkit-text-stroke:0.264px #2b2f38;letter-spacing:0.566px">12345</div><div class="t" style="left:1225.30px;top:685.25px;font-size:16.48px;color:#2b2f38;-webkit-text-stroke:0.264px #2b2f38;letter-spacing:0.061px">USA</div><div class="t" style="left:620.50px;top:752.81px;font-size:18.54px;color:#1a2130;-webkit-text-stroke:0.83px #1a2130;letter-spacing:0.664px">Contact</div><div class="t" style="left:620.40px;top:795.89px;font-size:14.42px;color:#676e79;-webkit-text-stroke:0.231px #676e79;letter-spacing:0.067px">Work Phone</div><div class="t" style="left:821.30px;top:795.89px;font-size:14.42px;color:#676e79;-webkit-text-stroke:0.231px #676e79;letter-spacing:0.310px">Mobile Phone</div><div class="t" style="left:1023.00px;top:795.89px;font-size:14.42px;color:#676e79;-webkit-text-stroke:0.231px #676e79;letter-spacing:0.214px">Home Phone</div><div class="t" style="left:620.40px;top:826.65px;font-size:16.48px;color:#2b2f38;-webkit-text-stroke:0.264px #2b2f38;letter-spacing:0.474px">+358 12 345 6789</div><div class="t" style="left:822.30px;top:826.65px;font-size:16.48px;color:#2b2f38;-webkit-text-stroke:0.264px #2b2f38;letter-spacing:0.494px">+358 12 345 6789</div><div class="t" style="left:1024.60px;top:826.65px;font-size:16.48px;color:#2b2f38;-webkit-text-stroke:0.264px #2b2f38">-</div><div class="t" style="left:620.40px;top:874.99px;font-size:14.42px;color:#676e79;-webkit-text-stroke:0.231px #676e79;letter-spacing:0.036px">Work Email</div><div class="t" style="left:620.40px;top:905.95px;font-size:16.48px;color:#2b2f38;-webkit-text-stroke:0.264px #2b2f38;letter-spacing:0.496px">codyfisher@abccompany.com</div><div class="t" style="left:620.40px;top:953.69px;font-size:14.42px;color:#676e79;-webkit-text-stroke:0.231px #676e79;letter-spacing:-0.206px">Slack</div><div class="b" style="left:301px;top:968px;width:1139px;height:56px;background:#fff;border-top:1px solid #e6e7e8;box-sizing:border-box"></div><div class="b" style="left:320px;top:978px;width:58px;height:36px;border-radius:4px;background:#f1f3f5"></div><div class="b" style="left:388px;top:978px;width:72px;height:36px;border-radius:4px;background:#f1f3f5"></div><div class="b" style="left:471px;top:978px;width:78px;height:36px;border-radius:4px;background:#f1f3f5"></div><div class="t" style="left:333.70px;top:988.08px;font-size:17.51px;color:#1866c9;-webkit-text-stroke:0.53px #1866c9;letter-spacing:-0.231px">Edit</div><div class="t" style="left:402.80px;top:988.08px;font-size:17.51px;color:#1866c9;-webkit-text-stroke:0.53px #1866c9;letter-spacing:-0.641px">Share</div><div class="t" style="left:484.40px;top:988.08px;font-size:17.51px;color:#c41f16;-webkit-text-stroke:0.53px #c41f16;letter-spacing:-0.051px">Delete</div></body></html>
